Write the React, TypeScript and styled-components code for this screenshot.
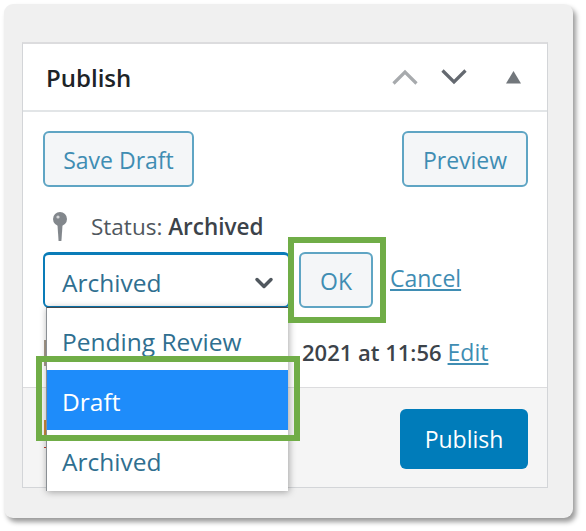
import styled, { createGlobalStyle } from "styled-components";
import { ChevronDown } from "lucide-react";

const GlobalStyle = createGlobalStyle`
    html, body {
        margin: 0;
        padding: 0;
        background: #ffffff;
    }
    body {
        font-family: "Open Sans", "Noto Sans", "Liberation Sans", sans-serif;
    }
`;

const Page = styled.div`
    width: 586px;
    height: 531px;
    padding: 4px 0 0 4px;
    box-sizing: border-box;
`;

const Card = styled.div`
    width: 569px;
    height: 514px;
    padding: 38px 25px 30px 18px;
    box-sizing: border-box;
    background: #f0f0f0;
    border-radius: 9px;
    box-shadow: 3px 4px 5px rgba(0, 0, 0, 0.4);
`;

const Panel = styled.div`
    position: relative;
    width: 526px;
    height: 446px;
    box-sizing: border-box;
    display: flex;
    flex-direction: column;
    background: #ffffff;
    border: 1px solid #d3d5d8;
    border-top-width: 2px;
    border-top-color: #dcdcde;
`;

const Header = styled.div`
    height: 68px;
    flex: none;
    box-sizing: border-box;
    display: flex;
    align-items: center;
    justify-content: space-between;
    padding: 0 26px 0 23px;
    border-bottom: 2px solid #e2e5e7;
`;

const Title = styled.h2`
    margin: 0;
    font-size: 24px;
    font-weight: 600;
    color: #1d2327;
`;

const HeaderIcons = styled.div`
    display: flex;
    align-items: center;
    gap: 23px;
`;

const Body = styled.div`
    flex: 1;
    padding: 19px 19px 0 20px;
    display: flex;
    flex-direction: column;
`;

const ButtonRow = styled.div`
    display: flex;
    justify-content: space-between;
`;

const SecondaryButton = styled.button<{ $width: number }>`
    width: ${(p) => p.$width}px;
    height: 56px;
    box-sizing: border-box;
    padding: 2px 0 0 0;
    background: #f4f6f8;
    border: 2px solid #5fa5c4;
    border-radius: 6px;
    color: #3f8db3;
    font-family: inherit;
    font-size: 23px;
`;

const StatusRow = styled.div`
    height: 65px;
    box-sizing: border-box;
    display: flex;
    align-items: center;
    padding: 14px 0 0 9px;
    color: #50575e;
    font-size: 22.5px;
`;

const StatusText = styled.span`
    margin-left: 23px;

    b {
        font-weight: 600;
        color: #3c434a;
    }
`;

const EditRow = styled.div`
    display: flex;
    align-items: center;
    gap: 9px;
`;

const SelectBox = styled.div`
    width: 247px;
    height: 56px;
    box-sizing: border-box;
    display: flex;
    align-items: center;
    justify-content: space-between;
    padding: 4px 10px 0 17px;
    background: #ffffff;
    border: 2px solid #0a7cb8;
    border-top-width: 3px;
    border-radius: 6px;
    color: #2f6f90;
    font-size: 24.5px;
`;

const CancelLink = styled.a`
    margin: 0 0 4px 8px;
    color: #3f8db3;
    font-size: 23px;
    text-decoration: underline;
`;

const DateRow = styled.div`
    margin-top: 28px;
    padding-left: 259px;
    color: #3c434a;
    font-size: 22px;
    font-weight: 600;
    white-space: nowrap;
`;

const EditLink = styled.a`
    margin-left: 6px;
    color: #3f8db3;
    font-size: 23px;
    font-weight: 400;
    text-decoration: underline;
`;

const Footer = styled.div`
    height: 100px;
    flex: none;
    box-sizing: border-box;
    display: flex;
    align-items: center;
    justify-content: flex-end;
    padding: 2px 19px 0 20px;
    background: #f5f5f5;
    border-top: 1px solid #dcdcde;
`;

const PublishButton = styled.button`
    width: 128px;
    height: 60px;
    border: none;
    border-radius: 6px;
    background: #007cba;
    color: #ffffff;
    font-family: inherit;
    font-size: 23px;
`;

const Dropdown = styled.ul`
    position: absolute;
    left: 23px;
    top: 263px;
    width: 242px;
    height: 184px;
    box-sizing: border-box;
    margin: 0;
    padding: 2px 0 0 0;
    list-style: none;
    background: #ffffff;
    border-top: 1px solid #44484c;
    border-left: 1px solid #8a8f94;
    box-shadow: 1px 1px 7px rgba(0, 0, 0, 0.35);
`;

const Option = styled.li<{ $selected?: boolean }>`
    height: 60px;
    box-sizing: border-box;
    padding: 2px 0 0 15px;
    display: flex;
    align-items: center;
    background: ${(p) => (p.$selected ? "#1e8cfa" : "transparent")};
    color: ${(p) => (p.$selected ? "#ffffff" : "#2f6f90")};
    font-size: 24.5px;
`;

const Highlight = styled.div<{ $x: number; $y: number; $w: number; $h: number }>`
    position: absolute;
    left: ${(p) => p.$x}px;
    top: ${(p) => p.$y}px;
    width: ${(p) => p.$w}px;
    height: ${(p) => p.$h}px;
    box-sizing: border-box;
    border: 6px solid #70ad47;
`;

// bits of the icons that stick out from behind the open dropdown
const Sliver = styled.span<{ $y: number; $h: number; $color: string }>`
    position: absolute;
    left: 21px;
    top: ${(p) => p.$y}px;
    width: 2px;
    height: ${(p) => p.$h}px;
    background: ${(p) => p.$color};
`;

const PinIcon = () => (
    <svg width="16" height="30" viewBox="0 0 16 30">
        <circle cx="8" cy="7" r="7" fill="#82878c" />
        <circle cx="6" cy="5" r="1.6" fill="#d5d7d9" />
        <path d="M5.4 12h5.2L9.4 29H6.6z" fill="#82878c" />
    </svg>
);

const Chevron = ({ up, color }: { up?: boolean; color: string }) => (
    <svg width="26" height="16" viewBox="0 0 26 16">
        <path
            d={up ? "M1.5 14.5 13 3l11.5 11.5" : "M1.5 1.5 13 13 24.5 1.5"}
            fill="none"
            stroke={color}
            strokeWidth="3.2"
        />
    </svg>
);

const TriangleIcon = styled.svg`
    margin-left: 16px;
`;

const Triangle = () => (
    <TriangleIcon width="15" height="13" viewBox="0 0 15 13">
        <path d="M7.5 0 15 12.5H0z" fill="#72777c" />
    </TriangleIcon>
);

export default function App() {
    return (
        <>
            <GlobalStyle />
            <Page>
                <Card>
                    <Panel>
                        <Header>
                            <Title>Publish</Title>
                            <HeaderIcons>
                                <Chevron up color="#a7aaad" />
                                <Chevron color="#646970" />
                                <Triangle />
                            </HeaderIcons>
                        </Header>
                        <Body>
                            <ButtonRow>
                                <SecondaryButton $width={151}>Save Draft</SecondaryButton>
                                <SecondaryButton $width={126}>Preview</SecondaryButton>
                            </ButtonRow>
                            <StatusRow>
                                <PinIcon />
                                <StatusText>
                                    Status: <b>Archived</b>
                                </StatusText>
                            </StatusRow>
                            <EditRow>
                                <SelectBox>
                                    Archived
                                    <ChevronDown size={28} color="#50575e" strokeWidth={3} />
                                </SelectBox>
                                <SecondaryButton $width={74}>OK</SecondaryButton>
                                <CancelLink>Cancel</CancelLink>
                            </EditRow>
                            <DateRow>
                                2021 at 11:56<EditLink>Edit</EditLink>
                            </DateRow>
                        </Body>
                        <Footer>
                            <PublishButton>Publish</PublishButton>
                        </Footer>
                        <Sliver $y={296} $h={26} $color="#a89c8c" />
                        <Sliver $y={376} $h={18} $color="#c98a3a" />
                        <Sliver $y={403} $h={1} $color="#c0392b" />
                        <Dropdown>
                            <Option>Pending Review</Option>
                            <Option $selected>Draft</Option>
                            <Option>Archived</Option>
                        </Dropdown>
                        <Highlight $x={265} $y={193} $w={98} $h={86} />
                        <Highlight $x={13} $y={312} $w={264} $h={85} />
                    </Panel>
                </Card>
            </Page>
        </>
    );
}
